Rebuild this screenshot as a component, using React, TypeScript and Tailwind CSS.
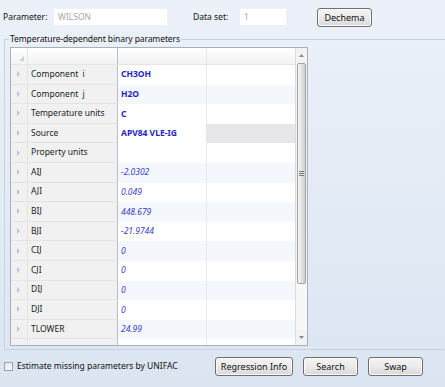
const rows = [
  { name: "Component  i", value: "CH3OH", kind: "text" },
  { name: "Component  j", value: "H2O", kind: "text" },
  { name: "Temperature units", value: "C", kind: "text" },
  { name: "Source", value: "APV84 VLE-IG", kind: "text" },
  { name: "Property units", value: "", kind: "text" },
  { name: "AIJ", value: "-2.0302", kind: "num" },
  { name: "AJI", value: "0.049", kind: "num" },
  { name: "BIJ", value: "448.679", kind: "num" },
  { name: "BJI", value: "-21.9744", kind: "num" },
  { name: "CIJ", value: "0", kind: "num" },
  { name: "CJI", value: "0", kind: "num" },
  { name: "DIJ", value: "0", kind: "num" },
  { name: "DJI", value: "0", kind: "num" },
  { name: "TLOWER", value: "24.99", kind: "num" },
  { name: "", value: "", kind: "num" },
];

const Button = ({ label, w }: { label: string; w: string }) => (
  <button
    className={`${w} h-[19px] rounded-[3px] border border-[#707070] bg-gradient-to-b from-[#f4f4f4] via-[#ebebeb] to-[#d8d8d8] text-[#111] text-[9px] shadow-[inset_0_0_0_1px_#fbfbfb] leading-none`}
  >
    {label}
  </button>
);

const RowArrow = () => (
  <svg width="4" height="6" viewBox="0 0 4 6">
    <polygon points="0,0 3,3 0,6" fill="#c4c4c4" />
  </svg>
);

export default function App() {
  return (
    <div
      className="w-[445px] h-[387px] overflow-hidden bg-gradient-to-b from-[#ecf1f9] to-[#dbe5f2] text-[8.5px] text-[#111]"
      style={{ fontFamily: '"Noto Sans", "Open Sans", sans-serif' }}
    >
      {/* top row */}
      <div className="flex items-center pt-[8px] h-[26px]">
        <span className="ml-[3px] w-[50px]">Parameter:</span>
        <div className="w-[115px] h-[18px] bg-white border border-[#eef1f5] flex items-center pl-[4px] text-[#a8a8a8]">
          WILSON
        </div>
        <span className="ml-[25px] w-[46px]">Data set:</span>
        <div className="w-[48px] h-[18px] bg-white border border-[#eef1f5] flex items-center pl-[4px] text-[#a8a8a8]">
          1
        </div>
        <div className="ml-[30px]">
          <Button label="Dechema" w="w-[55px]" />
        </div>
      </div>

      {/* group box */}
      <fieldset className="mt-[6px] ml-[4px] w-[450px] border border-[#c9d3de] pl-[5px] pt-[1px] pb-[3px]">
        <legend className="ml-[-1px] px-[1px] leading-[14px] tracking-[-0.1px] text-[#111]">
          Temperature-dependent binary parameters
        </legend>

        <div className="flex w-[298px] h-[299px] border border-[#a7b0bb] bg-white overflow-hidden">
          <div className="flex-1 flex flex-col overflow-hidden">
            {/* header */}
            <div className="flex h-[17px] shrink-0 bg-gradient-to-b from-white to-[#f1f2f4] border-b border-[#e2e5e9]">
              <div className="w-[17px] border-r border-[#e2e5e9] flex items-end justify-end pr-[3px] pb-[3px]">
                <svg width="5" height="5" viewBox="0 0 5 5">
                  <polygon points="5,0 5,5 0,5" fill="#d0d0d0" />
                </svg>
              </div>
              <div className="w-[90px] border-r border-[#b9bec4]" />
              <div className="w-[89px] border-r border-[#e2e5e9]" />
              <div className="w-[88px]" />
            </div>

            {rows.map((r, i) => {
              const alt = i % 2 === 1;
              const cellBg = i === 3 ? "bg-white" : alt ? "bg-[#f4f7fb]" : "bg-white";
              return (
                <div key={i} className="flex h-[19.6px] shrink-0">
                  <div className="w-[17px] bg-[#f1f1f1] border-r border-b border-[#e4e4e4] flex items-center pl-[6px]">
                    <RowArrow />
                  </div>
                  <div className="w-[90px] bg-[#f1f1f1] border-r border-[#b9bec4] border-b border-b-[#e4e4e4] flex items-center pl-[3px] whitespace-pre text-[#222]">
                    {r.name}
                  </div>
                  <div
                    className={`w-[89px] ${cellBg} border-r border-[#e6e9ed] flex items-center pl-[3px] ${
                      r.kind === "text"
                        ? "font-bold text-[#2626c6]"
                        : "italic text-[#3a3ad0]"
                    }`}
                  >
                    {r.value}
                  </div>
                  <div className={`w-[88px] ${i === 3 ? "bg-[#e7e7eb]" : cellBg}`} />
                </div>
              );
            })}
          </div>

          {/* scrollbar */}
          <div className="w-[12px] flex flex-col bg-[#f3f3f3] border-l border-[#dcdcdc]">
            <div className="h-[15px] flex items-center justify-center">
              <svg width="5" height="3" viewBox="0 0 5 3">
                <polygon points="0,3 2.5,0 5,3" fill="#8a8a8a" />
              </svg>
            </div>
            <div className="mx-[1px] h-[221px] rounded-[2px] border border-[#a3a3a3] bg-gradient-to-r from-[#f6f6f6] to-[#cfcfcf] flex flex-col items-center pt-[107px] gap-[1px]">
              <div className="w-[5px] h-[1px] bg-[#7a7a7a]" />
              <div className="w-[5px] h-[1px] bg-[#7a7a7a]" />
              <div className="w-[5px] h-[1px] bg-[#7a7a7a]" />
            </div>
            <div className="flex-1 bg-[#f7f7f7]" />
            <div className="h-[15px] flex items-center justify-center">
              <svg width="5" height="3" viewBox="0 0 5 3">
                <polygon points="0,0 5,0 2.5,3" fill="#8a8a8a" />
              </svg>
            </div>
          </div>
        </div>
      </fieldset>

      {/* bottom row */}
      <div className="flex items-center mt-[7px] h-[19px]">
        <div className="ml-[4px] w-[9px] h-[9px] border border-[#9aa3ad] bg-gradient-to-br from-[#e2e6ea] to-[#fafafa]" />
        <span className="ml-[4px]">Estimate missing parameters by UNIFAC</span>
        <div className="ml-auto mr-[22px] flex gap-[10px]">
          <Button label="Regression Info" w="w-[78px]" />
          <Button label="Search" w="w-[55px]" />
          <Button label="Swap" w="w-[55px]" />
        </div>
      </div>
    </div>
  );
}
